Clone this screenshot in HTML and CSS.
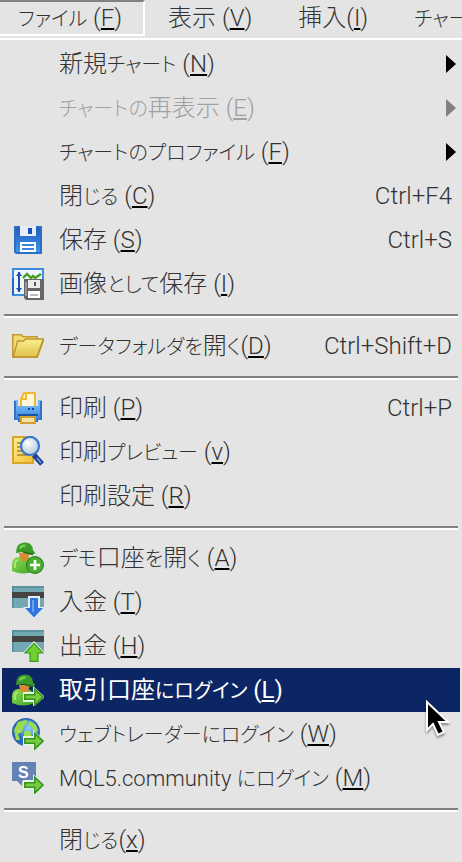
FILE: index.html
```
<!DOCTYPE html>
<html lang="ja">
<head>
  <meta charset="UTF-8">
  <title>ファイル</title>
  <meta name="viewport" content="width=device-width, initial-scale=1.0">
  <link rel="stylesheet" href="styles.css">
</head>
<body>
  <nav class="menubar">
    <button class="active"><span class="kana">ファイル</span> (<u>F</u>)</button>
    <button>表示 (<u>V</u>)</button>
    <button>挿入(<u>I</u>)</button>
    <button><span class="kana">チャー</span></button>
  </nav>

  <div class="menu">
    <button class="item">
      <span class="icon"></span>
      <span class="label">新規<span class="kana">チャート</span> (<u>N</u>)</span>
      <span class="arrow"></span>
    </button>
    <button class="item" disabled>
      <span class="icon"></span>
      <span class="label"><span class="kana">チャートの</span>再表示 (<u>E</u>)</span>
      <span class="arrow"></span>
    </button>
    <button class="item">
      <span class="icon"></span>
      <span class="label"><span class="kana">チャートのプロファイル</span> (<u>F</u>)</span>
      <span class="arrow"></span>
    </button>
    <button class="item">
      <span class="icon"></span>
      <span class="label">閉<span class="kana">じる</span> (<u>C</u>)</span>
      <span class="key">Ctrl+F4</span>
    </button>
    <button class="item">
      <svg class="icon" viewBox="0 0 16 16">
        <path d="M1 1h14v14H2l-1-1z" fill="url(#blue)"/>
        <path d="M1.5 1.5h13v13H2.2l-.7-.7z" fill="none" stroke="#2a70c0" stroke-width="1"/>
        <path d="M4 1h8v5H4z" fill="#e8eef8"/>
        <path d="M8 2h2v3H8z" fill="#1a4fc0"/>
        <path d="M4 9h8v5H4z" fill="#fff"/>
        <path d="M5 10h6v1H5zM5 12h6v1H5z" fill="#3d88dc"/>
      </svg>
      <span class="label">保存 (<u>S</u>)</span>
      <span class="key">Ctrl+S</span>
    </button>
    <button class="item">
      <svg class="icon" viewBox="0 0 16 16">
        <path d="M.5 .5h15v13H.5z" fill="#eef5fc" stroke="#3b8de0"/>
        <path d="M.5 13.5V5" stroke="#2466bd"/>
        <path d="M3.5 2v10" stroke="#1a4fae"/>
        <path d="M2 4l1.500-2L5 4zM2 10l1.500 2L5 10z" fill="#1a4fae"/>
        <path d="M5.500 5l2-2 2 2 1-1 1 1 1.500-1 1.500-1" stroke="#45a020" stroke-width="1.200" fill="none"/>
        <path d="M6 5.500h10V16H7l-1-1z" fill="#666"/>
        <path d="M8 6h6v4H8z" fill="#eee"/>
        <path d="M11 7h1v2h-1z" fill="#555"/>
        <path d="M8 11.500h6V15H8z" fill="#fff"/>
        <path d="M9 13h4v1H9z" fill="#bbb"/>
        <path d="M7 7v7" stroke="#aaa" stroke-width=".7"/>
      </svg>
      <span class="label">画像<span class="kana">として</span>保存 (<u>I</u>)</span>
    </button>
    <hr>
    <button class="item">
      <svg class="icon" viewBox="0 0 16 16">
        <path d="M.4 13.600V2.400h4.200l1 1h7v2h3L12.600 13.600z" fill="#f2dc72" stroke="#c39a33" stroke-width=".8"/>
        <path d="M.6 13.500l2.200-8h3l1-1h8.800l-3.100 9z" fill="url(#yellow)" stroke="#bd9530" stroke-width=".7"/>
      </svg>
      <span class="label"><span class="kana">データフォルダを</span>開<span class="kana">く</span>(<u>D</u>)</span>
      <span class="key">Ctrl+Shift+D</span>
    </button>
    <hr>
    <button class="item">
      <svg class="icon" viewBox="0 0 16 16">
        <path d="M4.500 8V3.500L6 .5h5.500V8z" fill="#fff8dc" stroke="#f0b92f"/>
        <path d="M4.500 3.500H7V1" fill="none" stroke="#f0b92f"/>
        <path d="M1 4h2v3h10V4h2v10h-2v1H3v-1H1z" fill="url(#printer)"/>
        <path d="M1.500 4.500v9M14.500 4.500v9" stroke="#2f72c8"/>
        <path d="M3 11.500h10" stroke="#1b51a0"/>
        <path d="M8 8h1v1H8zM10 8h1v1h-1z" fill="#1740a8"/>
        <path d="M4.500 12.500h7v3h-7z" fill="#f5e2a0" stroke="#d2a030"/>
      </svg>
      <span class="label">印刷 (<u>P</u>)</span>
      <span class="key">Ctrl+P</span>
    </button>
    <button class="item">
      <svg class="icon" viewBox="0 0 16 16">
        <path d="M.5 .5h10v13H.5z" fill="url(#paper)" stroke="#d9a62a"/>
        <path d="M2.500 3.500h3M2.500 5.500h3M2.500 7.500h3M2.500 9.500h6" stroke="#a8842e" stroke-width=".7"/>
        <path d="M11 9.500l4 4.500" stroke="#1c3f92" stroke-width="2.600"/>
        <path d="M12.500 11l2 2.500" stroke="#6ba4e6" stroke-width=".8"/>
        <circle cx="9" cy="5" r="4.500" fill="url(#glass)" stroke="#3678cf" stroke-width="1.100"/>
      </svg>
      <span class="label">印刷<span class="kana">プレビュー</span> (<u>v</u>)</span>
    </button>
    <button class="item">
      <span class="icon"></span>
      <span class="label">印刷設定 (<u>R</u>)</span>
    </button>
    <hr>
    <button class="item">
      <svg class="icon" viewBox="0 0 16 16">
        <use href="#person"/>
        <circle cx="11.500" cy="11.500" r="4.200" fill="#4db030" stroke="#2b8520" stroke-width=".6"/>
        <path d="M11.500 9v5M9 11.500h5" stroke="#fff" stroke-width="1.300"/>
      </svg>
      <span class="label"><span class="kana">デモ</span>口座<span class="kana">を</span>開<span class="kana">く</span> (<u>A</u>)</span>
    </button>
    <button class="item">
      <svg class="icon" viewBox="0 0 16 16">
        <use href="#card"/>
        <path d="M8 5h6v5.500h2.500L11 16.500 5.500 10.500H8z" fill="#e6eef6"/>
        <path d="M9 6h4v5h2.500L11 15.700 6.500 11H9z" fill="#2f75dc"/>
        <path d="M10.500 7v6" stroke="#67a3ef"/>
      </svg>
      <span class="label">入金 (<u>T</u>)</span>
    </button>
    <button class="item">
      <svg class="icon" viewBox="0 0 16 16">
        <use href="#card"/>
        <path d="M8.500 16v-4.500h-3L11 5.500l5.500 6h-3V16z" fill="#e8f4e2"/>
        <path d="M9 15.700V11.500H6.500L11 6.700l4.500 4.800H13v4.200z" fill="#6fd02f" stroke="#3a981f" stroke-width=".6"/>
      </svg>
      <span class="label">出金 (<u>H</u>)</span>
    </button>
    <button class="item selected">
      <svg class="icon" viewBox="0 0 16 16">
        <use href="#person"/>
        <use href="#go"/>
      </svg>
      <span class="label">取引口座<span class="kana">にログイン</span> (<u>L</u>)</span>
      <svg class="cursor" viewBox="0 0 24 40">
        <path d="M1 2v28l6-6 5 11 6-3-5-10h9z" fill="#000" stroke="#fff" stroke-width="2"/>
      </svg>
    </button>
    <button class="item">
      <svg class="icon" viewBox="0 0 16 16">
        <circle cx="7" cy="7" r="6.600" fill="url(#globe)" stroke="#2d66ae" stroke-width=".8"/>
        <path d="M1 6l2-4 4-1 1 1-2 2-1 3-2 1 1 3-2 0zM9 1.500l3 2 1 3-2 1-1-3-2-1zM6 6.500l3 0 1 3-2 2-2-2z" fill="#9bdc4c"/>
        <use href="#go"/>
      </svg>
      <span class="label"><span class="kana">ウェブトレーダーにログイン</span> (<u>W</u>)</span>
    </button>
    <button class="item">
      <svg class="icon" viewBox="0 0 16 16">
        <path d="M0 0h12v9.500H5V12L2.500 9.500H0z" fill="#6482b6"/>
        <text class="badge" x="3" y="8">S</text>
        <use href="#go"/>
      </svg>
      <span class="label"><span class="site">MQL5.community </span> <span class="kana">にログイン</span> (<u>M</u>)</span>
    </button>
    <hr>
    <button class="item">
      <span class="icon"></span>
      <span class="label">閉<span class="kana">じる</span>(<u>x</u>)</span>
    </button>
  </div>

  <!-- shared icon parts -->
  <svg class="defs" width="0" height="0">
    <defs>
      <linearGradient id="blue" x2="0" y2="1">
        <stop offset="0" stop-color="#2157b8"/><stop offset="1" stop-color="#3f9df0"/>
      </linearGradient>
      <linearGradient id="yellow" x2="0" y2="1">
        <stop offset="0" stop-color="#fbf08e"/><stop offset="1" stop-color="#dfbf4c"/>
      </linearGradient>
      <linearGradient id="printer" x2="0" y2="1">
        <stop offset="0" stop-color="#82bdf4"/><stop offset=".5" stop-color="#5aa5ee"/><stop offset="1" stop-color="#2b6fc8"/>
      </linearGradient>
      <linearGradient id="paper" x2="1" y2="1">
        <stop offset="0" stop-color="#fff09a"/><stop offset="1" stop-color="#f3bd2c"/>
      </linearGradient>
      <radialGradient id="glass" cx=".4" cy=".35">
        <stop offset="0" stop-color="#fff"/><stop offset="1" stop-color="#c7d5e5"/>
      </radialGradient>
      <radialGradient id="globe" cx=".6" cy=".35">
        <stop offset="0" stop-color="#8fd0ff"/><stop offset="1" stop-color="#2467c4"/>
      </radialGradient>
      <linearGradient id="green" x2="1" y2="1">
        <stop offset="0" stop-color="#8fdc55"/><stop offset="1" stop-color="#3fa426"/>
      </linearGradient>
      <g id="person">
        <path d="M0 14.500V11q0-3 3-3.500h5q3 1 3 4v3q-5 2.500-11 0z" fill="url(#green)"/>
        <path d="M3.500 5.500h5.500l-1 3-2 1.500-2-2z" fill="#d98a34"/>
        <path d="M2 5.500Q2 .3 6.500 .3q3.500 0 4 3.700l1.200 1.800-2 .5-4-1.300z" fill="#3a9c28"/>
        <path d="M3.800 3.200q1-1.600 3-1.500" stroke="#7fd052" fill="none"/>
        <path d="M5.500 5l5 1.200" stroke="#1f6d18" stroke-width=".8"/>
        <path d="M1.500 13V11q0-1.500 1.500-2" stroke="#b3ea7c" fill="none" stroke-width=".8"/>
      </g>
      <g id="card">
        <path d="M0 0h16v11H0z" fill="#73a9b3"/>
        <path d="M0 .5h16M.4 0v11" stroke="#568b98" stroke-width=".8"/>
        <path d="M0 3h16v3H0z" fill="#444"/>
      </g>
      <g id="go">
        <path d="M5.500 9h5V6l6 5.500-6 5V14h-5z" fill="#e8f4e2"/>
        <path d="M6.400 10.400h5V7.700l4.100 3.800-4.100 4v-2.900h-5z" fill="#78cc42" stroke="#36951f" stroke-width=".8"/>
      </g>
    </defs>
  </svg>
</body>
</html>
```
FILE: styles.css
```
* {
  box-sizing: border-box;
}

body {
  margin: 0;
  background: #e4e4e4;
  color: #333;
  font-family: Roboto, "Noto Sans CJK JP", sans-serif;
  font-size: 24px;
  font-weight: 300;
  font-feature-settings: "palt";
  overflow-x: hidden;
}

button {
  border: 0;
  background: none;
  color: inherit;
  font: inherit;
  font-feature-settings: inherit;
  text-align: left;
  white-space: nowrap;
}

u {
  text-decoration: underline #000 2px;
  text-underline-offset: 2px;
}

.kana {
  font-size: 20px;
}

.site {
  font-size: 22px;
}

.menubar {
  display: flex;
  height: 40px;
  overflow: hidden;
  border-bottom: 2px solid #fff;
}

.menubar button {
  flex: none;
  height: 36px;
  padding: 0 0 0 23px;
  margin-right: 23px;
  line-height: 36px;
}

.menubar button:last-child {
  margin-right: 0;
}

.menubar .active {
  margin-right: 0;
  padding: 0 21px 0 18px;
  border-top: 2px solid #808080;
  border-right: 2px solid #fff;
  border-bottom: 2px solid #fff;
  line-height: 32px;
}

.menu {
  padding: 2px 2px 0;
}

.item {
  position: relative;
  display: flex;
  align-items: center;
  width: 100%;
  height: 44px;
  padding: 0 8px 0 10px;
  line-height: 44px;
}

.item:disabled {
  color: #a0a0a0;
}

.item:disabled u {
  text-decoration-color: #a0a0a0;
}

.selected {
  background: #0c2564;
  color: #fff;
  font-weight: 400;
}

.selected u {
  text-decoration-color: #fff;
}

.icon {
  flex: none;
  width: 32px;
  height: 32px;
  margin-right: 15px;
}

.label {
  flex: 1;
}

.arrow {
  margin-right: -4px;
  border: 9px solid transparent;
  border-left: 10px solid #000;
  border-right: 0;
}

.item:disabled .arrow {
  border-left-color: #808080;
}

hr {
  height: 4px;
  margin: 8px 2px 6px;
  border: 0;
  border-top: 2px solid #808080;
  background: #fff;
}

.badge {
  fill: #fff;
  font: bold 8px "Liberation Sans", sans-serif;
}

.cursor {
  position: absolute;
  top: 32px;
  right: 10px;
  z-index: 1;
  width: 24px;
  height: 40px;
  filter: drop-shadow(0 2px 1px rgba(0, 0, 0, 0.4));
}

.defs {
  position: absolute;
}
```
